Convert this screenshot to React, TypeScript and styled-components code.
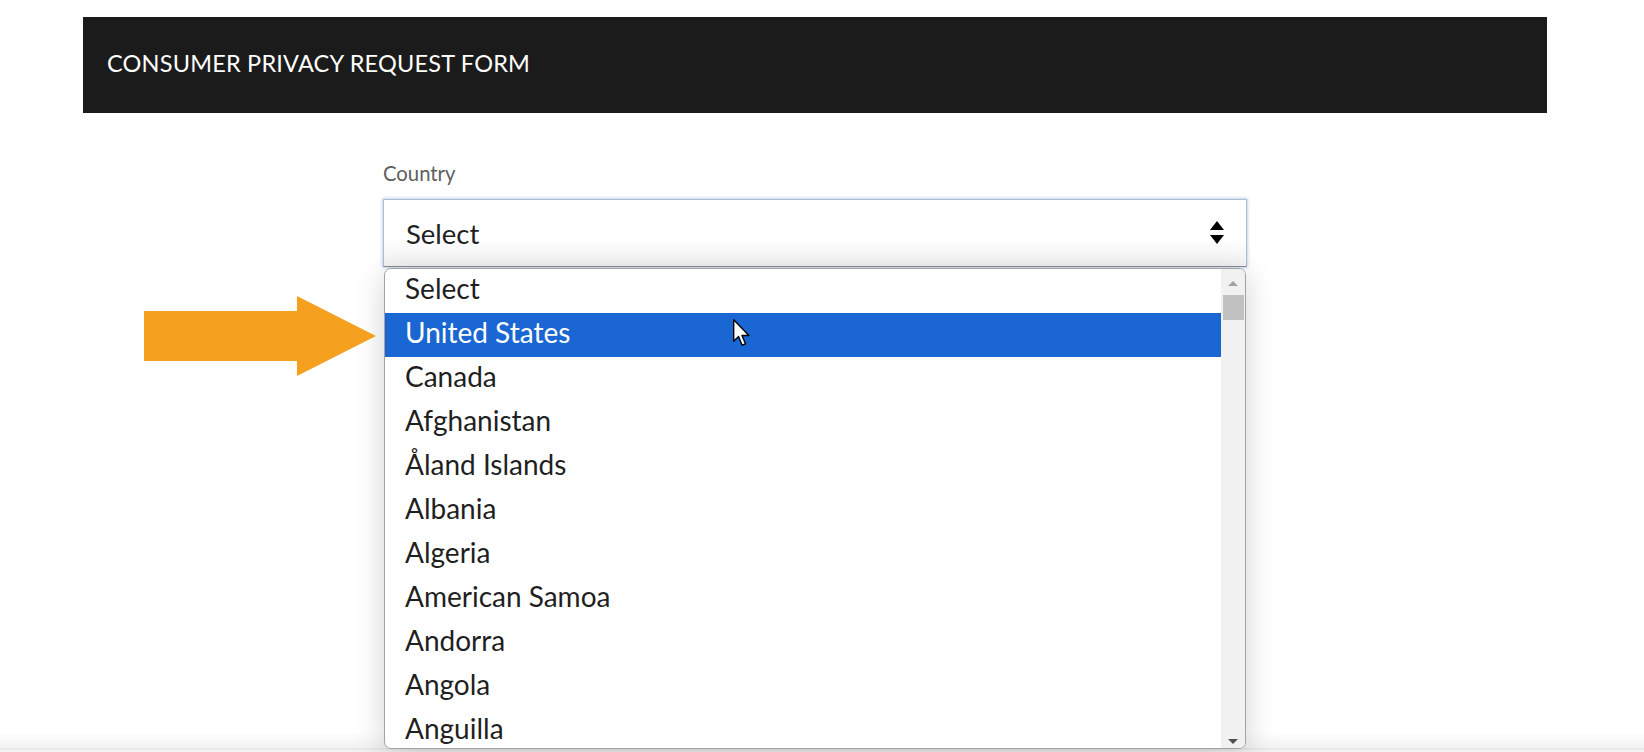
import styled, { createGlobalStyle } from 'styled-components';

const GlobalStyle = createGlobalStyle`
  html, body {
    margin: 0;
    padding: 0;
    background: #ffffff;
    overflow: hidden;
  }
  body {
    font-family: Lato, "Open Sans", "Liberation Sans", sans-serif;
  }
  * {
    box-sizing: border-box;
  }
`;

const Page = styled.div`
  position: relative;
  width: 1644px;
  height: 752px;
  padding-top: 17px;
  overflow: hidden;
`;

const Container = styled.div`
  width: 1464px;
  margin-left: 83px;
`;

const Header = styled.header`
  display: flex;
  align-items: center;
  height: 96px;
  padding: 0 24px 4px;
  background: #1b1b1b;
  h1 {
    margin: 0;
    font-size: 23.5px;
    font-weight: 400;
    color: #ffffff;
    letter-spacing: 0.2px;
  }
`;

const Form = styled.form`
  width: 864px;
  margin: 0 auto;
  padding-top: 47px;
`;

const Field = styled.div`
  position: relative;
`;

const Label = styled.label`
  display: block;
  font-size: 20.3px;
  line-height: 26px;
  color: #5e5e5e;
  margin-bottom: 13px;
`;

const SelectBox = styled.div`
  display: flex;
  align-items: center;
  justify-content: space-between;
  height: 68px;
  padding: 0 22px 0 22px;
  border: 1px solid #aebdd2;
  border-bottom-color: #8c8c8c;
  border-radius: 1px;
  background: linear-gradient(180deg, #ffffff 55%, #f3f3f3 100%);
  box-shadow: 0 0 3px 1px rgba(120, 160, 220, 0.45);
  font-size: 27.5px;
  color: #1f1f1f;
`;

const Dropdown = styled.div`
  position: absolute;
  top: calc(100% + 1px);
  left: 1px;
  right: 1px;
  height: 481px;
  display: flex;
  background: #ffffff;
  border: 1px solid #a3a3a3;
  border-radius: 7px;
  overflow: hidden;
  box-shadow: 0 6px 30px rgba(0, 0, 0, 0.18);
  z-index: 2;
`;

const OptionList = styled.ul`
  flex: 1;
  margin: 0;
  padding: 0;
  list-style: none;
`;

const Option = styled.li<{ $active?: boolean }>`
  height: 44px;
  padding: 1px 20px 7px;
  font-size: 28px;
  line-height: 36px;
  white-space: nowrap;
  color: ${(p) => (p.$active ? '#ffffff' : '#1f1f1f')};
  background: ${(p) => (p.$active ? '#1a66d2' : 'transparent')};
`;

const Scrollbar = styled.div`
  width: 24px;
  display: flex;
  flex-direction: column;
  align-items: center;
  background: #f1f1f1;
  padding: 12px 1px 4px;
`;

const ScrollArrow = styled.div<{ $down?: boolean; $enabled?: boolean }>`
  width: 0;
  height: 0;
  border-left: 5px solid transparent;
  border-right: 5px solid transparent;
  ${(p) =>
    p.$down
      ? `border-top: 5px solid ${p.$enabled ? '#505050' : '#a3a3a3'};`
      : `border-bottom: 5px solid ${p.$enabled ? '#505050' : '#a3a3a3'};`}
`;

const Thumb = styled.div`
  width: 21px;
  height: 25px;
  margin-top: 9px;
  background: #c1c1c1;
`;

const Spacer = styled.div`
  flex: 1;
`;

const Annotation = styled.svg`
  position: absolute;
  left: 144px;
  top: 296px;
  z-index: 3;
`;

const Cursor = styled.svg`
  position: absolute;
  left: 733px;
  top: 319px;
  z-index: 4;
`;

const BottomShade = styled.div`
  position: absolute;
  left: 0;
  right: 0;
  bottom: 0;
  height: 20px;
  background: linear-gradient(180deg, rgba(0, 0, 0, 0) 0%, rgba(0, 0, 0, 0.05) 80%, #e6e6e6 82%, #f6f6f6 100%);
  z-index: 1;
`;

const SortIcon = () => (
  <svg width="14" height="24" viewBox="0 0 14 24">
    <path d="M7 0 L14 9 L0 9 Z" fill="#000" />
    <path d="M0 14 L14 14 L7 23 Z" fill="#000" />
  </svg>
);

const countries = [
  'Select',
  'United States',
  'Canada',
  'Afghanistan',
  'Åland Islands',
  'Albania',
  'Algeria',
  'American Samoa',
  'Andorra',
  'Angola',
  'Anguilla',
];

export default function App() {
  return (
    <>
      <GlobalStyle />
      <Page>
        <Container>
          <Header>
            <h1>CONSUMER PRIVACY REQUEST FORM</h1>
          </Header>
          <Form>
            <Field>
              <Label>Country</Label>
              <SelectBox>
                <span>Select</span>
                <SortIcon />
              </SelectBox>
              <Dropdown>
                <OptionList>
                  {countries.map((c) => (
                    <Option key={c} $active={c === 'United States'}>
                      {c}
                    </Option>
                  ))}
                </OptionList>
                <Scrollbar>
                  <ScrollArrow />
                  <Thumb />
                  <Spacer />
                  <ScrollArrow $down $enabled />
                </Scrollbar>
              </Dropdown>
            </Field>
          </Form>
        </Container>
        <Annotation width="232" height="80" viewBox="0 0 232 80">
          <path d="M0 15 L153 15 L153 0 L232 40 L153 80 L153 65 L0 65 Z" fill="#f5a01f" />
        </Annotation>
        <Cursor width="18" height="28" viewBox="0 0 13 20">
          <path
            d="M0.5 0.5 L0.5 16 L4 12.6 L6.6 18.8 L9 17.8 L6.5 11.8 L11.5 11.8 Z"
            fill="#ffffff"
            stroke="#000000"
            strokeWidth="1"
            strokeLinejoin="round"
          />
        </Cursor>
        <BottomShade />
      </Page>
    </>
  );
}
